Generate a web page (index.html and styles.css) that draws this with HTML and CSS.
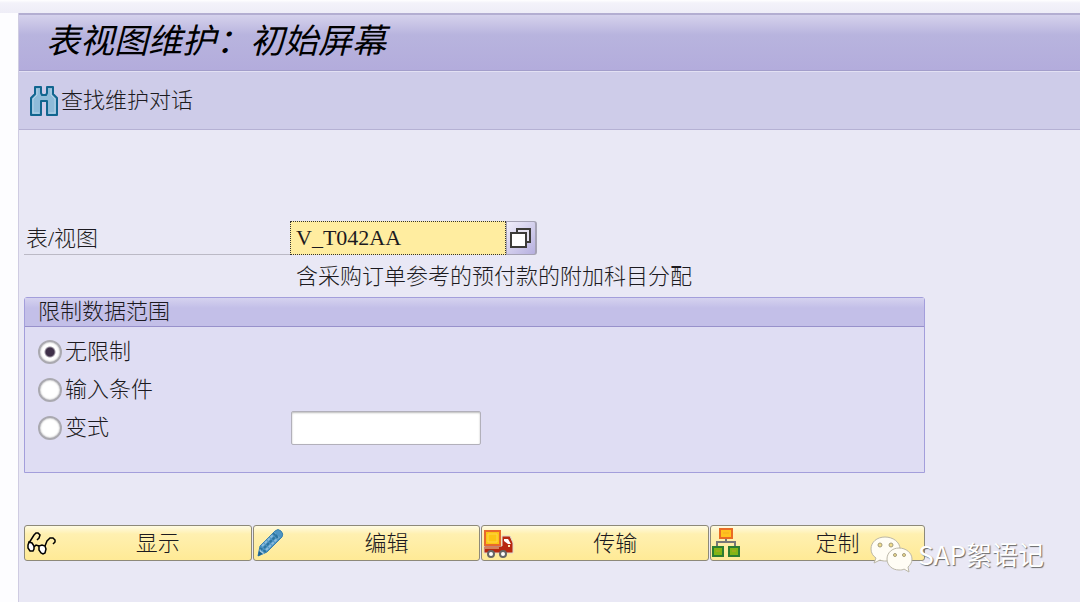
FILE: index.html
```html
<!DOCTYPE html>
<html lang="zh-CN">
<head>
    <meta charset="UTF-8">
    <meta name="viewport" content="width=device-width, initial-scale=1.0">
    <title>表视图维护：初始屏幕</title>
    <link rel="stylesheet" href="styles.css">
</head>
<body>
    <div class="window">
        <header class="title-bar">
            <h1>表视图维护：初始屏幕</h1>
        </header>
        <nav class="toolbar">
            <button type="button" class="tool-btn">
                <svg width="28" height="32" viewBox="0 0 28 32">
                    <path d="M5 2h6v6l1 2h4l1-2V2h6v7l4 4v17H17V16h-6v14H1V13l4-4z" fill="#8fbbd9" stroke="#11658f" stroke-width="2" stroke-linejoin="round"/>
                    <path d="M7 4v6l-4 4v14h6M21 4v6l4 4v14h-6" fill="none" stroke="#b4d3e8" stroke-width="1"/>
                </svg>
                <span>查找维护对话</span>
            </button>
        </nav>

        <form class="content">
            <div class="field-row">
                <label class="field-label" for="view">表/视图</label>
                <input class="view-input" id="view" type="text" value="V_T042AA">
                <button type="button" class="match-btn" aria-label="搜索帮助">
                    <svg width="22" height="22" viewBox="0 0 22 22">
                        <rect x="7" y="2" width="13" height="13" fill="#e7e4f3" stroke="#3c3b38" stroke-width="2"/>
                        <rect x="1" y="6" width="15" height="14" fill="#fff" stroke="#3c3b38" stroke-width="2"/>
                    </svg>
                </button>
            </div>
            <p class="description">含采购订单参考的预付款的附加科目分配</p>

            <section class="group">
                <h2>限制数据范围</h2>
                <div class="group-body">
                    <div class="option">
                        <input type="radio" name="range" id="none" checked>
                        <label for="none">无限制</label>
                    </div>
                    <div class="option">
                        <input type="radio" name="range" id="cond">
                        <label for="cond">输入条件</label>
                    </div>
                    <div class="option">
                        <input type="radio" name="range" id="variant">
                        <label for="variant">变式</label>
                        <input type="text" class="variant-input" aria-label="变式">
                    </div>
                </div>
            </section>

            <div class="actions">
                <button type="button" class="action">
                    <svg width="32" height="32" viewBox="0 0 32 32">
                        <g fill="#fff" stroke="#000" stroke-width="1.5">
                            <path d="M3 15l-1 3v3l2 3h3l1-2v-3l-2-3z"/>
                            <path d="M13 19v4l2 3 2 1 2-1 1-4-1-3-3-1z"/>
                        </g>
                        <path d="M3 16l5-8 2-2h2l2 2-1 3-2 2M8 20l2-2 3 1M19 19l2-5 3-3h3l2 2v2l-2 2" fill="none" stroke="#000" stroke-width="1.5"/>
                    </svg>
                    <span>显示</span>
                </button>
                <button type="button" class="action">
                    <svg width="32" height="32" viewBox="0 0 32 32">
                        <path d="M3 29l2-10L20 4q3-3 6 0 3 3 1 6L12 25z" fill="#4d94c3" stroke="#3a80ad" stroke-width="1"/>
                        <path d="M7 19L20 6M11 23L24 10" stroke="#8bbbdc" stroke-width="2" stroke-dasharray="3 1"/>
                        <path d="M9 21L22 8M18 6l6 6M5 21l6 4" stroke="#2c739f" stroke-width="2" fill="none" stroke-dasharray="3 1"/>
                        <path d="M5 22l1 2 2 1 1 2-5 1z" fill="#a8cae0"/>
                        <path d="M3 29l1-5 4 3z" fill="#1d628f"/>
                    </svg>
                    <span>编辑</span>
                </button>
                <button type="button" class="action">
                    <svg width="32" height="32" viewBox="0 0 32 32">
                        <path d="M19 9h8l3 7v10H1v-7h18z" fill="#b8280f" stroke="#ddd8cf" stroke-width="1"/>
                        <rect x="2" y="4" width="15" height="14" fill="#fcc515" stroke="#e8692c" stroke-width="2"/>
                        <path d="M5 7h9v8H5z" fill="none" stroke="#ffd64b" stroke-width="1"/>
                        <path d="M21 12h4l3 5h-3l-4-3z" fill="#fff"/>
                        <path d="M25 18h2v2h-2z" fill="#ffe9b0"/>
                        <path d="M2 21h14" stroke="#f2dca4" stroke-width="1"/>
                        <g fill="#fff" stroke="#666" stroke-width="2">
                            <circle cx="8" cy="27" r="3"/>
                            <circle cx="20" cy="27" r="3"/>
                        </g>
                    </svg>
                    <span>传输</span>
                </button>
                <button type="button" class="action action-last">
                    <svg width="32" height="32" viewBox="0 0 32 32">
                        <path d="M14 11v4M5 20v-5h18v5" fill="none" stroke="#777" stroke-width="2"/>
                        <rect x="8" y="2" width="12" height="9" fill="#ffc21e" stroke="#e96b24" stroke-width="2"/>
                        <rect x="1" y="20" width="10" height="9" fill="#83b516" stroke="#2c7d32" stroke-width="2"/>
                        <rect x="17" y="20" width="10" height="9" fill="#83b516" stroke="#2c7d32" stroke-width="2"/>
                        <path d="M11 6h6M4 24h4M20 24h4" stroke="#f09a2b" stroke-width="1" opacity=".5"/>
                    </svg>
                    <span>定制</span>
                </button>
            </div>
        </form>
    </div>

    <div class="watermark">
        <svg width="44" height="38" viewBox="0 0 44 38">
            <g fill="#fffdf5" stroke="#bbb7a8" stroke-width="1">
                <path d="M16 2C8 2 2 7 2 14c0 4 2 7 5 9l-2 5 6-3c2 1 4 1 6 1 8 0 14-5 14-12S24 2 16 2z"/>
                <path d="M30 13c-7 0-12 5-12 11s5 11 12 11c2 0 4 0 5-1l5 3-1-5c2-2 4-4 4-8 0-6-6-11-13-11z"/>
            </g>
            <g fill="#f2dd8b" stroke="#a39c7c" stroke-width="1">
                <circle cx="11" cy="10" r="2"/>
                <circle cx="22" cy="10" r="2"/>
                <circle cx="26" cy="20" r="1.5"/>
                <circle cx="35" cy="20" r="1.5"/>
            </g>
        </svg>
        <span>SAP絮语记</span>
    </div>
</body>
</html>
```
FILE: styles.css
```css
* {
    box-sizing: border-box;
}
body {
    margin: 0;
    min-height: 100vh;
    padding: 13px 0 0 18px;
    display: flex;
    font-family: "Liberation Serif", "Noto Sans CJK SC", sans-serif;
    font-size: 22px;
    font-weight: 300;
    line-height: 28px;
    color: #1c1a20;
    background: linear-gradient(#fff 0, #f3f2fa 3px, #eeedf7 13px, transparent 13px), #fdfdff;
}
button, input {
    font: inherit;
    color: inherit;
    margin: 0;
}
button {
    cursor: pointer;
}
.window {
    flex: 1;
    min-width: 0;
    border-left: 1px solid #cfcce2;
    background-color: #e9e8f5;
}
.title-bar {
    height: 58px;
    padding: 9px 27px;
    border-top: 2px solid #b3aed1;
    border-bottom: 1px solid #a39ecb;
    background: linear-gradient(#d5d2ec 0, #b8b4de 20px, #b3acdc 100%);
}
h1 {
    margin: 0;
    font-size: 34px;
    line-height: 36px;
    font-weight: 400;
    font-style: italic;
    color: #000;
}
.toolbar {
    height: 59px;
    padding: 0 11px;
    display: flex;
    align-items: center;
    border-top: 1px solid #e2e0f3;
    border-bottom: 1px solid #b5b1d4;
    background-color: #cecce9;
}
.tool-btn {
    display: flex;
    align-items: center;
    gap: 3px;
    padding: 0;
    border: none;
    background: none;
}
.content {
    max-width: 906px;
    padding: 91px 0 0 5px;
}
.field-row {
    display: flex;
    height: 34px;
}
.field-label {
    width: 266px;
    padding: 4px 2px 0;
    border-bottom: 1px solid #bbb9c5;
}
.view-input {
    width: 216px;
    padding: 0 5px;
    border: 1px dotted #333;
    border-radius: 0;
    background-color: #ffeda0;
    outline: none;
}
.match-btn {
    width: 31px;
    padding: 0;
    display: flex;
    align-items: center;
    justify-content: center;
    border: 1px solid #a5a2b4;
    border-right-width: 2px;
    border-radius: 0 3px 3px 0;
    background: linear-gradient(135deg, #f0eefa, #b6afdf);
}
.description {
    margin: 8px 0 6px;
    padding-left: 272px;
}
.group {
    border: 1px solid #a39edb;
    border-radius: 3px 3px 0 0;
    background-color: #dfddf3;
}
h2 {
    margin: 0;
    padding: 0 13px;
    font-size: 22px;
    line-height: 28px;
    font-weight: 300;
    border-bottom: 1px solid #9891cb;
    background: linear-gradient(#d5d2ef, #c3bfe8 10px);
}
.group-body {
    padding: 6px 13px 25px;
}
.option {
    display: flex;
    align-items: center;
    height: 38px;
}
.option label {
    width: 225px;
    padding-left: 3px;
}
.option input[type="radio"] {
    appearance: none;
    width: 24px;
    height: 24px;
    border: 2px solid #aaa9b0;
    border-radius: 50%;
    background-color: #fff;
    box-shadow: inset 0 0 2px #999;
}
.option input[type="radio"]:checked {
    background: radial-gradient(circle, #3f3049 4px, #fff 6px);
}
.variant-input {
    width: 190px;
    height: 34px;
    padding: 0 5px;
    margin-left: 4px;
    border: 1px solid #b2b0ba;
    border-radius: 2px;
    box-shadow: inset 0 1px 2px #bbb;
}
.actions {
    display: flex;
    gap: 1px;
    margin-top: 52px;
}
.action {
    flex: 228;
    height: 36px;
    padding: 0 1px;
    display: flex;
    align-items: center;
    border: 1px solid #8d8979;
    border-radius: 3px;
    background: linear-gradient(#fffbe2 0, #fff0b0 8px, #ffea96 100%);
}
.action-last {
    flex: 215;
}
.action svg {
    flex: none;
}
.action span {
    flex: 1;
    text-align: center;
    padding: 2px 0 0 8px;
}
.watermark {
    position: absolute;
    right: 36px;
    bottom: 29px;
    display: flex;
    align-items: center;
    gap: 5px;
    font-family: "Noto Sans CJK SC", sans-serif;
    font-size: 26px;
    font-weight: 400;
    color: #fff;
    text-shadow: 1px 1px 1px #666;
}
```
